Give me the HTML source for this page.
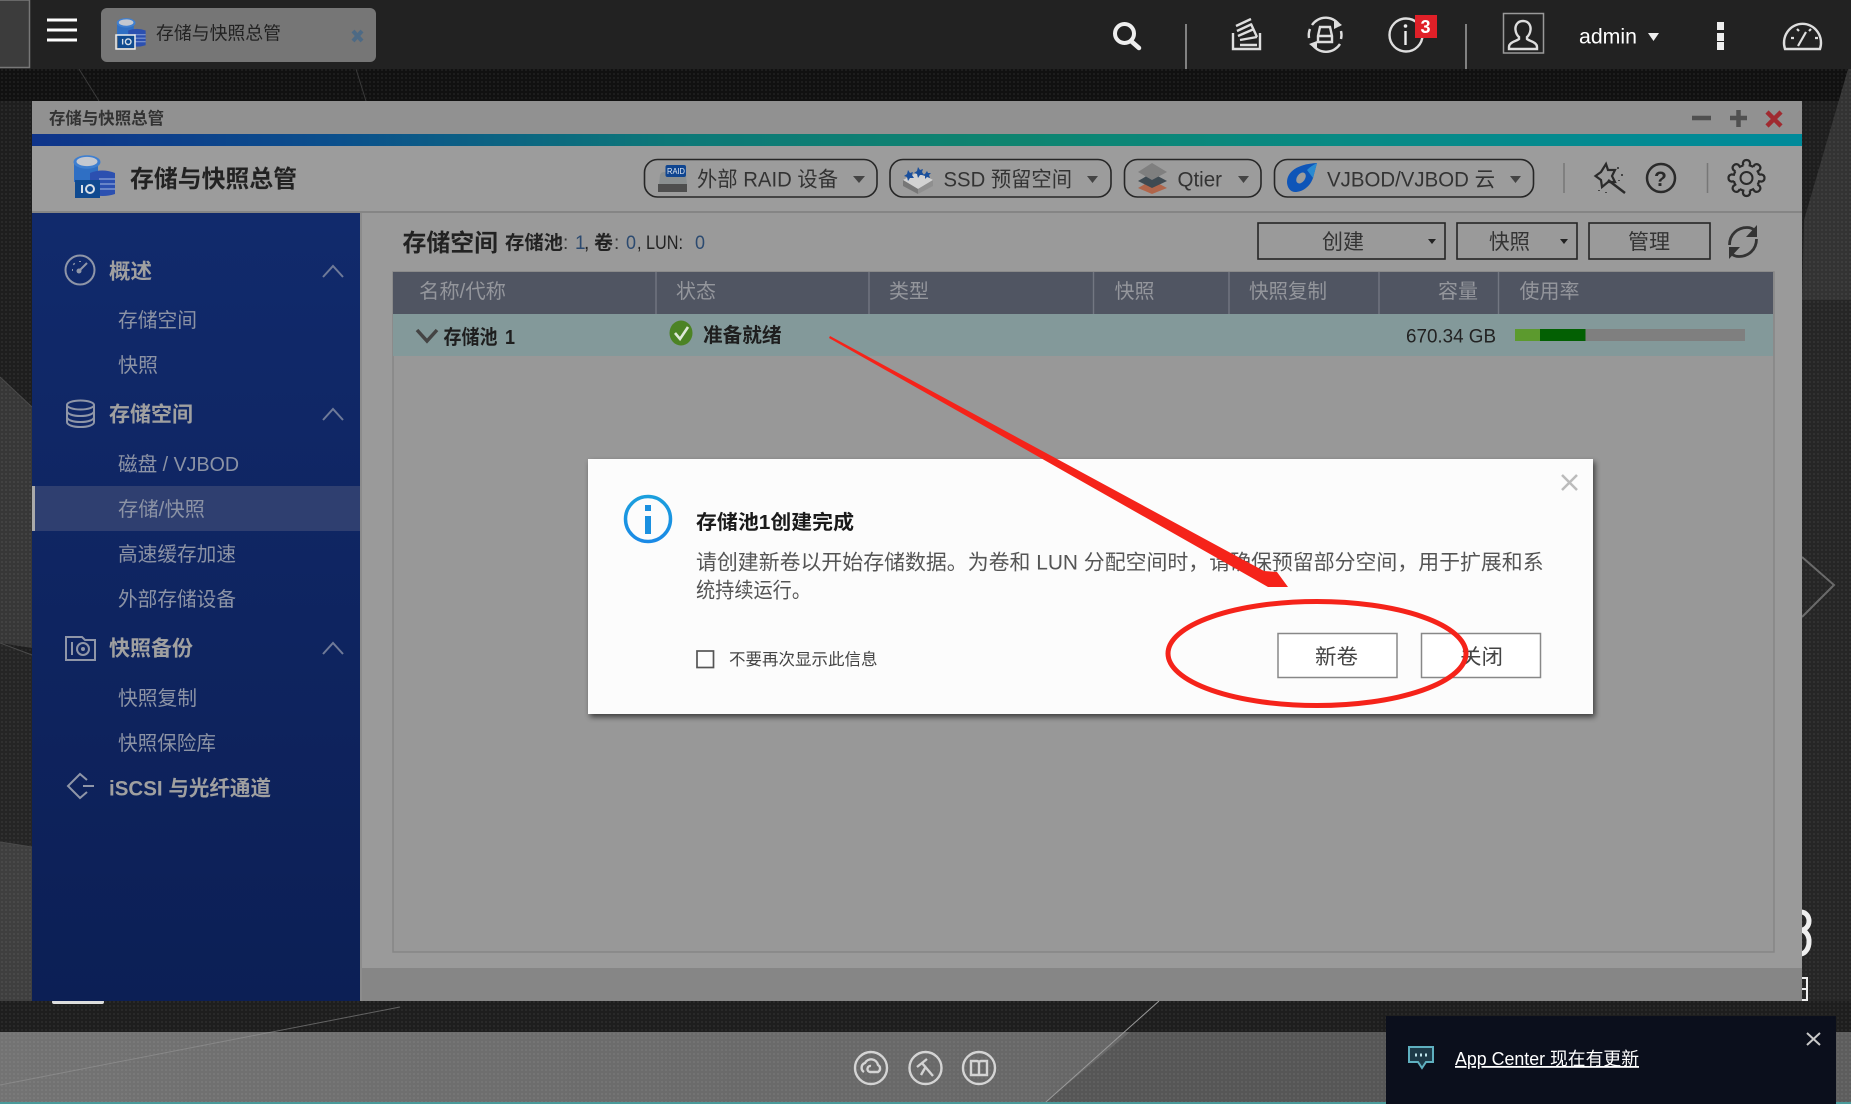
<!DOCTYPE html>
<html lang="zh-CN">
<head>
<meta charset="utf-8">
<title>存储与快照总管</title>
<style>
html,body{margin:0;padding:0;width:1851px;height:1104px;overflow:hidden;background:#1d1d1d}
svg{display:block;position:absolute;left:0;top:0}
text{font-family:"Liberation Sans","Noto Sans CJK SC",sans-serif;white-space:pre}
.sh{font-weight:700;font-size:21px;fill:#a0a0a0}
.ss{font-size:20px;fill:#8c93a5}
.th{font-size:20px;fill:#94969c}
.tb{font-size:21px;fill:#333}
.ic{fill:none;stroke:#8f96a8;stroke-width:2}
.wh{fill:none;stroke:#dedede;stroke-width:2.4}
</style>
</head>
<body>
<svg width="1851" height="1104" viewBox="0 0 1851 1104" xmlns="http://www.w3.org/2000/svg">
<defs>
<pattern id="dots" width="4" height="4" patternUnits="userSpaceOnUse"><rect width="4" height="4" fill="#000" opacity=".12"/><rect x="1" y="1" width="2" height="2" fill="#fff" opacity=".05"/></pattern>
<linearGradient id="strip" x1="0" x2="1" y1="0" y2="0"><stop offset="0" stop-color="#0f348a"/><stop offset=".17" stop-color="#0b4f8c"/><stop offset=".36" stop-color="#0d7878"/><stop offset=".55" stop-color="#0e846f"/><stop offset=".75" stop-color="#078a85"/><stop offset="1" stop-color="#008a9a"/></linearGradient>
<linearGradient id="side" x1="0" x2="0" y1="0" y2="1"><stop offset="0" stop-color="#112a6c"/><stop offset="1" stop-color="#0c1f55"/></linearGradient>
<linearGradient id="band" x1="0" x2="1" y1="0" y2="0"><stop offset="0" stop-color="#838383"/><stop offset=".5" stop-color="#777"/><stop offset="1" stop-color="#6b6b6b"/></linearGradient>
<linearGradient id="info" x1="0" x2="0" y1="0" y2="1"><stop offset="0" stop-color="#1b9fdd"/><stop offset="1" stop-color="#1a8ae6"/></linearGradient>
<symbol id="db" viewBox="0 0 42 43">
<path d="M1 7v20h24V7z" fill="#2f6fc4"/>
<ellipse cx="14" cy="7" rx="13.5" ry="6.8" fill="#3f7fd0"/>
<ellipse cx="14" cy="6.5" rx="10.5" ry="4.6" fill="#c4c8d0"/>
<path d="M17 18q12-5 25 0v21q-12 4-25 0z" fill="#2c50b0"/>
<path d="M26 24h16M26 29h16M26 34h16" stroke="#7d95d0" stroke-width="1.6"/>
<rect x="2" y="25" width="25" height="18" fill="#0f4a90"/>
<path d="M9 30v8" stroke="#d8e0e8" stroke-width="2"/>
<circle cx="17" cy="34" r="4" fill="none" stroke="#d8e0e8" stroke-width="2"/>
</symbol>
<path id="tooth" d="M-3.2-12.6L-3.6-15Q-3-18 0-18Q3-18 3.6-15L3.2-12.6A13 13 0 0 1 6.7-11.1" fill="none" stroke="#2a2a2a" stroke-width="2.2"/>
</defs>

<!-- desktop background -->
<rect width="1851" height="1104" fill="#222"/>
<polygon points="0,377 32,407 32,648 0,643" fill="#3f3f3f"/>
<polygon points="0,643 32,655 32,847 0,842" fill="#2a2a2a"/>
<polygon points="0,842 32,847 32,1001 0,1001" fill="#484848"/>
<polygon points="0,69 1851,69 1851,101 0,101" fill="#131313"/>
<polygon points="1804,220 1848,69 1851,69 1851,300 1802,300" fill="#3a3a3a"/>
<rect x="1802" y="300" width="49" height="732" fill="#2b2b2b"/>
<rect x="0" y="1001" width="1851" height="31" fill="#222"/>
<rect x="0" y="1032" width="1851" height="70" fill="url(#band)"/>
<polygon points="1130,1032 1386,1032 1386,1102 1046,1102" fill="#626262"/>
<rect x="1836" y="1032" width="15" height="70" fill="#6a6a6a"/>
<rect width="1851" height="1102" fill="url(#dots)"/>
<rect x="0" y="1102" width="1851" height="2" fill="#4a9a9a"/>
<path d="M79 69L99 101M356 69L366 101" stroke="#3a3a3a" stroke-width="1" fill="none"/>
<path d="M0 377L32 407M0 643L32 655M0 842L32 847" stroke="#4a4a4a" stroke-width="1" fill="none"/>
<path d="M1046 1102L1159 1001" stroke="#999" stroke-width="1" fill="none"/>
<path d="M0 1085L400 1007" stroke="#999" stroke-opacity=".55" stroke-width="1" fill="none"/>
<path d="M1802 557L1834 585L1802 617" fill="none" stroke="#6a6a6a" stroke-width="2"/>
<path d="M1801 912a8 9 0 0 1 0 18a9 11 0 0 1 8 12a9 12 0 0 1-8 12" fill="none" stroke="#eee" stroke-width="5"/>
<path d="M1802 978h5v22h-5M1802 989h5" fill="none" stroke="#eee" stroke-width="2"/>
<rect x="52" y="1000" width="52" height="4" rx="2" fill="#ddd"/>

<!-- top bar -->
<rect width="1851" height="69" fill="#222"/>
<rect x="-2" y="0" width="31.500" height="67.500" fill="#3c3c3c" stroke="#777" stroke-width="1.500"/>
<path d="M47 20h30M47 30h30M47 40h30" stroke="#fff" stroke-width="3"/>
<rect x="101" y="8" width="275" height="54" rx="6" fill="#767676"/>
<use href="#db" x="116" y="18" width="30" height="30"/>
<rect x="116" y="35" width="19" height="14" fill="none" stroke="#eee" stroke-width="1.500"/>
<text x="156" y="39.500" font-size="18" fill="#222" textLength="125" lengthAdjust="spacingAndGlyphs">存储与快照总管</text>
<path d="M353 31L362 41M362 31L353 41" stroke="#4d6a85" stroke-width="4"/>

<circle cx="1124.500" cy="33.500" r="9.500" fill="none" stroke="#eee" stroke-width="4"/>
<path d="M1131 41L1139 48" stroke="#eee" stroke-width="4.500" stroke-linecap="round"/>
<path d="M1186 24V69M1466 24V69" stroke="#aaa" stroke-width="1.400"/>

<path class="wh" d="M1233 33V49H1260V33"/>
<path class="wh" stroke-width="2" d="M1236 26L1251 19M1237 31L1252 24M1238 36L1254 29M1240 40L1257 37M1240 45H1257M1251 24L1257 37"/>

<path class="wh" d="M1312 25A16.500 16.500 0 0 1 1340 26M1340 44A16.500 16.500 0 0 1 1312 44M1309 38A16.500 16.500 0 0 1 1310 29M1341 31A16.500 16.500 0 0 1 1341 39"/>
<path d="M1334 19L1342 25L1334 29zM1317 41L1309 44L1317 50z" fill="#dedede"/>
<path class="wh" stroke-width="1.800" d="M1318 36L1320 27H1330L1332 36V42H1318zM1318 36H1332"/>

<ellipse cx="1406" cy="35" rx="16.500" ry="16.500" class="wh"/>
<path d="M1405.500 31V45" stroke="#eee" stroke-width="2.400"/>
<circle cx="1405.500" cy="26" r="1.800" fill="#eee"/>
<rect x="1415" y="15" width="22" height="23" fill="#e02028"/>
<text x="1420.500" y="33" font-size="18" font-weight="700" fill="#fff">3</text>

<rect x="1503.500" y="13.500" width="40" height="39.500" fill="none" stroke="#999" stroke-width="1.500"/>
<path class="wh" stroke-width="1.800" d="M1523 21c6 0 8 5 7.500 9c-.4 3-1.700 5.500-3.500 7v2c2 2 10 3 10 8v2h-28v-2c0-5 8-6 10-8v-2c-1.800-1.500-3.100-4-3.500-7c-.5-4 1.500-9 7.500-9z"/>
<text x="1579" y="43.500" font-size="21" fill="#fff" textLength="58" lengthAdjust="spacingAndGlyphs">admin</text>
<polygon points="1648,33 1659,33 1653.500,41" fill="#eee"/>
<rect x="1717" y="22" width="7" height="8" fill="#eee"/><rect x="1717" y="33" width="7" height="8" fill="#eee"/><rect x="1717" y="42" width="7" height="8" fill="#eee"/>
<path class="wh" d="M1785 49a18.500 19 0 1 1 35 0z"/>
<path d="M1798 46L1806 32M1791 38h3M1815 38h3M1797 29l2 2M1811 29l-2 2" stroke="#dedede" stroke-width="2.200" fill="none"/>

<!-- window -->
<rect x="32" y="101" width="1770" height="900" fill="#9a9a9a"/>
<rect x="32" y="101" width="1770" height="33" fill="#919191"/>
<text x="49" y="124" font-size="16.500" font-weight="700" fill="#333" textLength="115" lengthAdjust="spacingAndGlyphs">存储与快照总管</text>
<path d="M1692 118h19M1730 118h17M1738.500 110v17" stroke="#505050" stroke-width="4.500"/>
<path d="M1767 112L1781 126M1781 112L1767 126" stroke="#a02a30" stroke-width="4.500"/>
<rect x="32" y="134" width="1770" height="12" fill="url(#strip)"/>
<rect x="32" y="146" width="1770" height="65" fill="#9c9c9c"/>
<rect x="32" y="211" width="1770" height="2" fill="#858585"/>
<use href="#db" x="73" y="155" width="42" height="43"/>
<text x="130" y="187" font-size="24" font-weight="700" fill="#222" textLength="167" lengthAdjust="spacingAndGlyphs">存储与快照总管</text>

<!-- toolbar -->
<g fill="none" stroke="#262626" stroke-width="1.600">
<rect x="644.500" y="159.500" width="232.500" height="37.500" rx="13"/>
<rect x="890" y="159.500" width="221" height="37.500" rx="13"/>
<rect x="1124.500" y="159.500" width="136.500" height="37.500" rx="13"/>
<rect x="1274.500" y="159.500" width="259" height="37.500" rx="13"/>
</g>
<path d="M660 175q1-3 4-3h19q3 0 3 3l1 10h-28z" fill="#8a8f90"/>
<rect x="658" y="184" width="29" height="8" fill="#4e4e4e"/>
<rect x="665.500" y="165" width="20.500" height="12" rx="2" fill="#0f4590"/>
<text x="667" y="174" font-size="8" fill="#dfe6f0" textLength="18" lengthAdjust="spacingAndGlyphs">RAID</text>
<text class="tb" x="697" y="186.500" textLength="141" lengthAdjust="spacingAndGlyphs">外部 RAID 设备</text>
<polygon points="853,176 865,176 859,183" fill="#444"/>

<polygon points="903,180 918,172 933,180 918,189" fill="#d2d2d2"/>
<polygon points="903,180 918,189 918,194 903,186" fill="#777"/>
<polygon points="933,180 918,189 918,194 933,186" fill="#8f8f8f"/>
<path d="M908 170l2 3l3-1l-1 3l2 3l-4 0l-2 3l-1-4l-3-1l3-2zM918 167l2 3l3-1l-1 3l2 3l-4 0l-2 3l-1-4l-3-1l3-2zM927 171l1 2l3 0l-2 2l1 3l-3-1l-2 2l0-3l-3-1l3-1z" fill="#1a4f9c"/>
<text class="tb" x="943.500" y="186.500" textLength="128.500" lengthAdjust="spacingAndGlyphs">SSD 预留空间</text>
<polygon points="1087,176 1098,176 1092.500,183" fill="#444"/>

<polygon points="1152,180 1167,188 1152,194 1138,188" fill="#b0654a"/>
<polygon points="1152,173 1167,181 1152,188 1138,181" fill="#3e4a52"/>
<polygon points="1152,163 1167,172 1152,180 1138,172" fill="#7f7f7f"/>
<text class="tb" x="1177.500" y="186.500" textLength="44.500" lengthAdjust="spacingAndGlyphs">Qtier</text>
<polygon points="1238,176 1249,176 1243.500,183" fill="#444"/>

<path d="M1317 163L1313 178C1310 187 1302 192 1295 192C1290 192 1287 187 1287 182C1287 172 1297 164 1317 163z" fill="#0e55b8"/>
<path d="M1317 163L1313 178L1307 170C1310 167 1313 165 1317 163z" fill="#2a8ad0"/>
<ellipse cx="1301" cy="178" rx="4" ry="6" transform="rotate(35 1301 178)" fill="#9c9c9c"/>
<text class="tb" x="1327" y="186.500" textLength="168" lengthAdjust="spacingAndGlyphs">VJBOD/VJBOD 云</text>
<polygon points="1510,176 1521,176 1515.500,183" fill="#444"/>

<path d="M1564 163V193M1707.500 163V193" stroke="#777" stroke-width="1.500"/>
<path d="M1606 164L1608 170L1615 170L1612 176L1615 182L1608 182L1602 187L1601 180L1595.500 176L1601 172z" fill="none" stroke="#2a2a2a" stroke-width="2.200"/>
<path d="M1608 180L1625 193" stroke="#2a2a2a" stroke-width="2.500"/>
<path d="M1618 167v2M1622 174v2M1619 180v1M1599 190v1M1606 192v1" stroke="#444" stroke-width="2"/>
<circle cx="1661" cy="178" r="14" fill="none" stroke="#2a2a2a" stroke-width="2.500"/>
<text x="1654" y="186" font-size="21" fill="#2a2a2a" font-weight="700">?</text>
<g transform="translate(1746.500 178)">
<use href="#tooth"/><use href="#tooth" transform="rotate(45)"/><use href="#tooth" transform="rotate(90)"/><use href="#tooth" transform="rotate(135)"/><use href="#tooth" transform="rotate(180)"/><use href="#tooth" transform="rotate(225)"/><use href="#tooth" transform="rotate(270)"/><use href="#tooth" transform="rotate(315)"/>
<circle r="6" fill="none" stroke="#2a2a2a" stroke-width="2"/>
</g>

<!-- sidebar -->
<rect x="32" y="213" width="328" height="788" fill="url(#side)"/>
<rect x="360" y="213" width="2" height="788" fill="#8c8c8c"/>
<rect x="32" y="486" width="328" height="45" fill="#2f3f70"/>
<rect x="32" y="486" width="3" height="45" fill="#aaa"/>

<circle cx="80" cy="270" r="14.500" class="ic"/>
<path class="ic" d="M80 270L87 263M72 270h1M80 261v1M73.500 263.500l1 1"/><circle cx="79" cy="271" r="2.500" fill="#8f96a8"/>
<text class="sh" x="109" y="278.500" textLength="43" lengthAdjust="spacingAndGlyphs">概述</text>
<path class="ic" d="M323 277L333 266L343 277" style="stroke:#6f7a98"/>
<text class="ss" x="118" y="327" textLength="79" lengthAdjust="spacingAndGlyphs">存储空间</text>
<text class="ss" x="118" y="372" textLength="40" lengthAdjust="spacingAndGlyphs">快照</text>

<ellipse cx="80.500" cy="405" rx="13.500" ry="4.500" class="ic"/>
<path class="ic" d="M67 405v17c0 3 6 5 13.500 5s13.500-2 13.500-5v-17M67 411c0 3 6 5 13.500 5s13.500-2 13.500-5M67 417c0 3 6 5 13.500 5s13.500-2 13.500-5"/>
<text class="sh" x="109" y="421.500" textLength="84" lengthAdjust="spacingAndGlyphs">存储空间</text>
<path class="ic" d="M323 420L333 409L343 420" style="stroke:#6f7a98"/>
<text class="ss" x="118" y="471" textLength="121" lengthAdjust="spacingAndGlyphs">磁盘 / VJBOD</text>
<text class="ss" x="118" y="516" textLength="87" lengthAdjust="spacingAndGlyphs">存储/快照</text>
<text class="ss" x="118" y="561" textLength="118" lengthAdjust="spacingAndGlyphs">高速缓存加速</text>
<text class="ss" x="118" y="606" textLength="118" lengthAdjust="spacingAndGlyphs">外部存储设备</text>

<path class="ic" d="M66 660V637H82L85 640H95V660z"/>
<path class="ic" d="M72 642v13"/><circle cx="83" cy="649" r="6" class="ic"/><circle cx="83" cy="649" r="2" fill="#8f96a8"/>
<text class="sh" x="109" y="655.500" textLength="84" lengthAdjust="spacingAndGlyphs">快照备份</text>
<path class="ic" d="M323 654L333 643L343 654" style="stroke:#6f7a98"/>
<text class="ss" x="118" y="705" textLength="79" lengthAdjust="spacingAndGlyphs">快照复制</text>
<text class="ss" x="118" y="750" textLength="98" lengthAdjust="spacingAndGlyphs">快照保险库</text>
<path class="ic" stroke-width="2.400" d="M87 780L80 774L68 786L80 798L87 792M83 786H94"/>
<text class="sh" x="109" y="795.500" textLength="162" lengthAdjust="spacingAndGlyphs">iSCSI 与光纤通道</text>

<!-- content -->
<rect x="362" y="213" width="1440" height="755" fill="#9a9a9a"/>
<rect x="362" y="968" width="1440" height="33" fill="#868686"/>
<text x="402.500" y="251" font-size="24" font-weight="700" fill="#222" textLength="95.500" lengthAdjust="spacingAndGlyphs">存储空间</text>
<text x="505" y="249" font-size="19" fill="#222" font-weight="700" textLength="58" lengthAdjust="spacingAndGlyphs">存储池</text>
<text x="563" y="249" font-size="19" fill="#333">:</text>
<text x="575" y="249" font-size="19" fill="#2c4a70">1</text>
<text x="584" y="249" font-size="19" fill="#222">,</text>
<text x="594" y="249" font-size="19" fill="#222" font-weight="700" textLength="19" lengthAdjust="spacingAndGlyphs">卷</text>
<text x="614" y="249" font-size="19" fill="#333">:</text>
<text x="626" y="249" font-size="19" fill="#2c4a70" textLength="10" lengthAdjust="spacingAndGlyphs">0</text>
<text x="637" y="249" font-size="19" fill="#222" textLength="46" lengthAdjust="spacingAndGlyphs">, LUN:</text>
<text x="695" y="249" font-size="19" fill="#2c4a70" textLength="10" lengthAdjust="spacingAndGlyphs">0</text>

<g fill="none" stroke="#262626" stroke-width="1.600">
<rect x="1258" y="223" width="187" height="36"/>
<rect x="1457" y="223" width="120" height="36"/>
<rect x="1589" y="223" width="121" height="36"/>
</g>
<text class="tb" x="1322" y="249" textLength="42" lengthAdjust="spacingAndGlyphs">创建</text>
<text class="tb" x="1489" y="249" textLength="41" lengthAdjust="spacingAndGlyphs">快照</text>
<text class="tb" x="1628" y="249" textLength="42" lengthAdjust="spacingAndGlyphs">管理</text>
<polygon points="1428,239 1436,239 1432,244" fill="#222"/>
<polygon points="1560,239 1568,239 1564,244" fill="#222"/>
<path d="M1729.500 245C1729.500 234 1738 227.500 1747 227.500C1750 227.500 1752 228 1754 230M1756.500 239C1756.500 250 1748 256.500 1739 256.500C1736 256.500 1734 256 1732 254" fill="none" stroke="#333" stroke-width="2.800"/>
<path d="M1757 225V237H1746zM1729 259V247H1740z" fill="#333"/>

<!-- table -->
<rect x="393" y="272" width="1381" height="680" fill="#989898" stroke="#868686" stroke-width="1.500"/>
<rect x="393" y="272" width="1380" height="42" fill="#505562"/>
<rect x="393" y="314" width="1380" height="42" fill="#83999a"/>
<path d="M656 272v42M869 272v42M1093.500 272v42M1229 272v42M1379 272v42M1498.500 272v42" stroke="#737782" stroke-width="1.400"/>
<text class="th" x="419" y="298" textLength="87" lengthAdjust="spacingAndGlyphs">名称/代称</text>
<text class="th" x="676" y="298" textLength="40" lengthAdjust="spacingAndGlyphs">状态</text>
<text class="th" x="889" y="298" textLength="40" lengthAdjust="spacingAndGlyphs">类型</text>
<text class="th" x="1114.500" y="298" textLength="40" lengthAdjust="spacingAndGlyphs">快照</text>
<text class="th" x="1249" y="298" textLength="78" lengthAdjust="spacingAndGlyphs">快照复制</text>
<text class="th" x="1438" y="298" textLength="40" lengthAdjust="spacingAndGlyphs">容量</text>
<text class="th" x="1519.500" y="298" textLength="60" lengthAdjust="spacingAndGlyphs">使用率</text>

<path d="M417 330L427 341L437 330" fill="none" stroke="#444" stroke-width="3.500"/>
<text x="443.500" y="344" font-size="20" font-weight="700" fill="#1e1e1e" textLength="54" lengthAdjust="spacingAndGlyphs">存储池</text>
<text x="505" y="344" font-size="20" fill="#1e1e1e" font-weight="700" textLength="10" lengthAdjust="spacingAndGlyphs">1</text>
<ellipse cx="681" cy="333" rx="11.500" ry="12.500" fill="#4c8324"/>
<path d="M675 333L680 339L688 327" fill="none" stroke="#dfe8d8" stroke-width="2.600"/>
<text x="703" y="342" font-size="20" font-weight="700" fill="#1e1e1e" textLength="78.500" lengthAdjust="spacingAndGlyphs">准备就绪</text>
<text x="1406" y="342.500" font-size="19" fill="#222" textLength="90" lengthAdjust="spacingAndGlyphs">670.34 GB</text>
<rect x="1515" y="329" width="230" height="12" fill="#7f7f7f"/>
<rect x="1515" y="329" width="25" height="12" fill="#5c9a2e"/>
<rect x="1540" y="329" width="45.500" height="12" fill="#036003"/>

<!-- dialog -->
<rect x="588" y="459" width="1005" height="255" fill="#000" opacity=".6" transform="translate(2 3)" style="filter:blur(3px)"/>
<rect x="588" y="459" width="1005" height="255" fill="#fcfcfc"/>
<path d="M1562 475L1577 490M1577 475L1562 490" stroke="#bbb" stroke-width="2.500"/>
<circle cx="648" cy="519" r="22.500" fill="none" stroke="url(#info)" stroke-width="3.500"/>
<rect x="645" y="516" width="6" height="18" fill="#1a90e0"/>
<rect x="645" y="505" width="6" height="6" fill="#1a90e0"/>
<text x="696" y="529" font-size="20" font-weight="700" fill="#1a1a1a" textLength="158" lengthAdjust="spacingAndGlyphs">存储池1创建完成</text>
<text x="696" y="569.500" font-size="21" fill="#555" textLength="847.600" lengthAdjust="spacingAndGlyphs">请创建新卷以开始存储数据。为卷和 LUN 分配空间时，请确保预留部分空间，用于扩展和系</text>
<text x="696" y="597.500" font-size="21" fill="#555" textLength="115" lengthAdjust="spacingAndGlyphs">统持续运行。</text>
<rect x="697" y="651" width="16.500" height="16.500" fill="none" stroke="#555" stroke-width="1.700"/>
<text x="729" y="665" font-size="16.500" fill="#444" textLength="148.500" lengthAdjust="spacingAndGlyphs">不要再次显示此信息</text>
<rect x="1278" y="633.500" width="119" height="44" fill="#fff" stroke="#888" stroke-width="1.500"/>
<rect x="1421.500" y="633.500" width="119" height="44" fill="#fff" stroke="#888" stroke-width="1.500"/>
<text x="1315" y="664" font-size="21" fill="#444" textLength="43" lengthAdjust="spacingAndGlyphs">新卷</text>
<text x="1460" y="664" font-size="21" fill="#444" textLength="43" lengthAdjust="spacingAndGlyphs">关闭</text>

<!-- annotations -->
<polygon points="830,336 1264,571 1277,572 1288,587 1268,587 1254,579 829,338" fill="#f5231a"/>
<ellipse cx="1317" cy="653.500" rx="149" ry="52" fill="none" stroke="#f5231a" stroke-width="5"/>

<!-- dock -->
<g fill="none" stroke="#d4d4d4" stroke-width="2.400">
<circle cx="871" cy="1068" r="16"/><path d="M864 1072a5 5 0 0 1 1-9a7 7 0 0 1 13 2a4 4 0 0 1 0 7h-8a3 3 0 0 1 1-6"/>
<circle cx="925.500" cy="1068" r="16"/><path d="M917 1067L927 1059M922 1063L933 1076M925 1068L921 1075"/>
<circle cx="979" cy="1068" r="16"/><path d="M971 1061h6a2 2 0 0 1 2 2v12h-8zM987 1061h-6a2 2 0 0 0-2 2v12h8z"/>
</g>

<!-- notification -->
<rect x="1386" y="1016" width="450" height="88" fill="#0b0f1c"/>
<path d="M1409 1047h24v15h-7l-4 6l-4-6h-9z" fill="#1d3a48" stroke="#5fb0c0" stroke-width="2"/>
<path d="M1415 1055h2M1420 1055h2M1425 1055h2" stroke="#bfe4ea" stroke-width="3"/>
<text x="1455" y="1065" font-size="18" fill="#fff" text-decoration="underline" textLength="184" lengthAdjust="spacingAndGlyphs">App Center 现在有更新</text>
<path d="M1807 1033L1820 1045M1820 1033L1807 1045" stroke="#c8c8c8" stroke-width="2"/>
</svg>
</body>
</html>
